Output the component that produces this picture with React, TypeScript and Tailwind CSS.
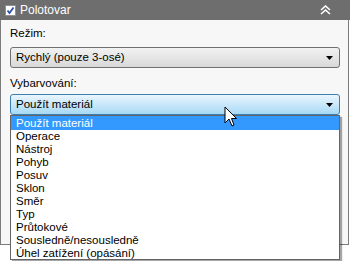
import React from "react";

const items = [
  "Použít materiál",
  "Operace",
  "Nástroj",
  "Pohyb",
  "Posuv",
  "Sklon",
  "Směr",
  "Typ",
  "Průtokové",
  "Sousledně/nesousledně",
  "Úhel zatížení (opásání)",
];

function Arrow() {
  return (
    <svg width="7" height="4" viewBox="0 0 7 4" className="block">
      <path d="M0 0 H7 L3.5 4 Z" fill="#000" />
    </svg>
  );
}

export default function App() {
  return (
    <div
      className="relative w-[350px] h-[261px] bg-white overflow-hidden text-[11.5px] text-black"
      style={{ fontFamily: '"Liberation Sans", Arial, sans-serif' }}
    >
      <div className="h-[20px] bg-[#6e6e6e] flex items-center pl-[5px] pr-[19px]">
        <div className="w-[11px] h-[11px] bg-white border border-[#8e8f8f] flex items-center justify-center">
          <svg width="9" height="9" viewBox="0 0 9 9">
            <path d="M1.5 4.5 L3.5 7 L7.5 1.5" stroke="#2a4fb0" strokeWidth="1.8" fill="none" />
          </svg>
        </div>
        <span className="ml-[4px] text-white leading-none text-[12px]">Polotovar</span>
        <div className="flex-1" />
        <svg width="11" height="10" viewBox="0 0 11 10">
          <path d="M1 5 L5.5 1 L10 5" stroke="#fff" strokeWidth="1.6" fill="none" />
          <path d="M1 9 L5.5 5 L10 9" stroke="#fff" strokeWidth="1.6" fill="none" />
        </svg>
      </div>
      <div className="w-[349px] h-[225px] bg-[#f7f7f7] border-l border-r border-b border-[#7c7c7c] pl-[9px] pr-[8px] pt-[6px]">
        <div className="leading-[15px] h-[15px]">Režim:</div>
        <div className="mt-[6px] h-[21px] w-[330px] rounded-[3px] border border-[#707070] bg-gradient-to-b from-[#f2f2f2] to-[#d9d9d9] flex items-center pl-[5px] pr-[6px]">
          <span className="flex-1 leading-none">Rychlý (pouze 3-osé)</span>
          <Arrow />
        </div>
        <div className="mt-[8px] leading-[15px] h-[15px]">Vybarvování:</div>
        <div className="mt-[3px] h-[21px] w-[330px] rounded-[3px] border border-[#3c7fb1] bg-gradient-to-b from-[#eaf6fd] to-[#a7d9f5] flex items-center pl-[5px] pr-[6px]">
          <span className="flex-1 leading-none">Použít materiál</span>
          <Arrow />
        </div>
      </div>
      <div className="absolute left-[10px] top-[115px] w-[330px] h-[145px] bg-white border border-[#646464] shadow-[2px_2px_1px_rgba(0,0,0,0.35)]">
        {items.map((t, i) => (
          <div
            key={t}
            className={
              i === 0
                ? "h-[14px] leading-[14px] pl-[5px] bg-[#3399ff] text-white"
                : "h-[13px] leading-[13px] pl-[5px]"
            }
          >
            {t}
          </div>
        ))}
      </div>
      <svg
        className="absolute left-[224px] top-[106px]"
        width="14"
        height="22"
        viewBox="0 0 14 22"
      >
        <path
          d="M1 1 L1 17 L5 13 L8 20 L10 19 L7.5 12.5 L12.5 12.5 Z"
          fill="#fff"
          stroke="#000"
          strokeWidth="1"
          strokeLinejoin="miter"
        />
      </svg>
    </div>
  );
}
